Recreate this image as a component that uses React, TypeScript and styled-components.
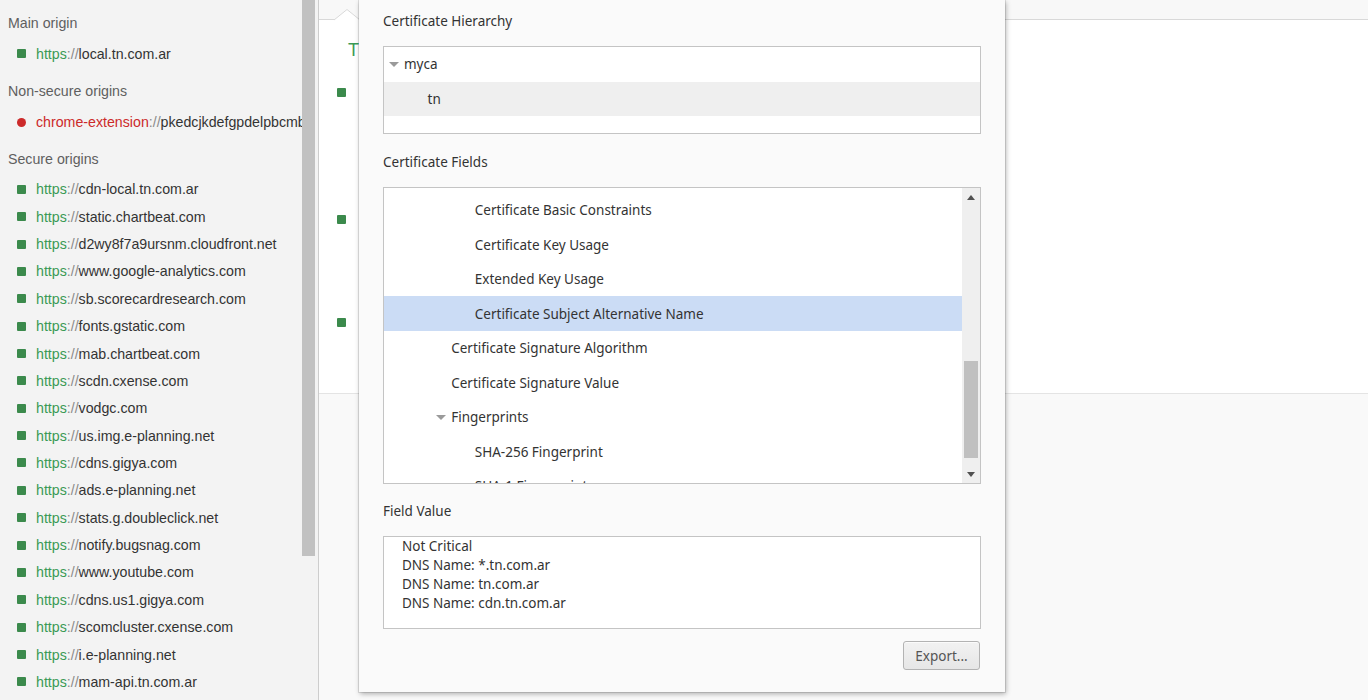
import React from "react";
import styled, { createGlobalStyle } from "styled-components";

const Global = createGlobalStyle`
  html, body { margin: 0; padding: 0; background: #ffffff; }
  body { font-family: "Liberation Sans", Arial, sans-serif; overflow: hidden; }
  * { box-sizing: border-box; }
`;

const Page = styled.div`
  position: relative;
  display: flex;
  width: 1368px;
  height: 700px;
  overflow: hidden;
`;

/* ---------- Sidebar ---------- */
const Sidebar = styled.aside`
  display: flex;
  width: 319px;
  height: 700px;
  background: #f3f3f3;
  border-right: 1px solid #cdcdcd;
`;

const OriginList = styled.div`
  flex: 1;
  min-width: 0;
  overflow: hidden;
`;

const Section = styled.section<{ $top: number }>`
  padding-top: ${(p) => p.$top}px;
`;

const SectionTitle = styled.div`
  height: 20px;
  line-height: 20px;
  padding-left: 8px;
  margin-bottom: 7px;
  font-size: 14.2px;
  color: #5f5f5f;
  white-space: nowrap;
`;

const OriginRow = styled.div`
  display: flex;
  align-items: center;
  height: 27.36px;
  padding-left: 17px;
  font-size: 14.2px;
  white-space: nowrap;
`;

const Marker = styled.span<{ $kind: "secure" | "insecure" }>`
  flex: none;
  width: 9px;
  height: 9px;
  margin-right: 10px;
  background: ${(p) => (p.$kind === "secure" ? "#3b8a4c" : "#cc2a2a")};
  border-radius: ${(p) => (p.$kind === "secure" ? "1px" : "50%")};
`;

const Scheme = styled.span<{ $kind: "secure" | "insecure" }>`
  color: ${(p) => (p.$kind === "secure" ? "#3a9a55" : "#cc2a2a")};
`;

const Sep = styled.span`
  color: #8a8a8a;
`;

const Host = styled.span`
  color: #333333;
`;

const SideScroll = styled.div`
  width: 13px;
  margin-right: 3px;
  flex: none;
`;

const SideThumb = styled.div`
  height: 556px;
  background: #c1c1c1;
`;

/* ---------- Main panel (behind dialog) ---------- */
const Main = styled.main`
  position: relative;
  flex: 1;
  display: flex;
  flex-direction: column;
  min-width: 0;
`;

const TopBar = styled.div`
  height: 20px;
  background: #f8f8f8;
  border-bottom: 1px solid #d9d9d9;
`;

const Notch = styled.svg`
  position: absolute;
  left: 15px;
  top: 8px;
`;

const Content = styled.div`
  height: 374px;
  padding: 18px 0 0 18px;
  background: #ffffff;
  border-bottom: 1px solid #e4e4e4;
`;

const Summary = styled.div`
  padding-left: 11px;
  height: 24px;
  line-height: 24px;
  font-size: 18px;
  color: #3a9a55;
  white-space: nowrap;
`;

const Explanation = styled.div<{ $h: number; $first?: boolean }>`
  display: flex;
  align-items: flex-start;
  height: ${(p) => p.$h}px;
  margin-top: ${(p) => (p.$first ? 21 : 0)}px;
`;

const ExplainSquare = styled.span`
  flex: none;
  width: 9px;
  height: 9px;
  margin-top: 5px;
  background: #3b8a4c;
  border-radius: 1px;
`;

const ExplainText = styled.div`
  margin-left: 30px;
  font-size: 14px;
  line-height: 20px;
  color: #333;
`;

const Footer = styled.div`
  flex: 1;
  background: #f9f9f9;
`;

/* ---------- Certificate dialog ---------- */
const Dialog = styled.div`
  position: absolute;
  left: 359px;
  top: 0;
  width: 646px;
  height: 692px;
  display: flex;
  flex-direction: column;
  padding: 12px 24px 0 24px;
  background: #fafafa;
  box-shadow: 0 0 0 1px rgba(0, 0, 0, 0.1), 1px 2px 5px rgba(0, 0, 0, 0.3);
  font-family: "Noto Sans", "DejaVu Sans", sans-serif;
  font-size: 13.5px;
  color: #333333;
`;

const Label = styled.div<{ $gap: number }>`
  height: 18px;
  line-height: 18px;
  margin-top: ${(p) => p.$gap}px;
  margin-bottom: 16px;
  white-space: nowrap;
`;

const Box = styled.div<{ $h: number }>`
  position: relative;
  height: ${(p) => p.$h}px;
  background: #ffffff;
  border: 1px solid #c4c4c4;
  overflow: hidden;
`;

const FieldsBox = styled(Box)`
  display: flex;
`;

const TreeViewport = styled.div`
  flex: 1;
  min-width: 0;
  overflow: hidden;
`;

const TreeScroller = styled.div`
  padding-top: 4.75px;
`;

const TreeRow = styled.div<{ $level: number; $selected?: boolean; $shade?: boolean }>`
  display: flex;
  align-items: center;
  height: 34.5px;
  flex: none;
  padding-left: ${(p) => 20 + p.$level * 23.6}px;
  white-space: nowrap;
  background: ${(p) => (p.$selected ? "#cbdcf5" : p.$shade ? "#efefef" : "transparent")};
`;

const Expander = styled.span`
  width: 0;
  height: 0;
  margin-left: -15px;
  margin-right: 5px;
  margin-top: 1px;
  border-left: 5px solid transparent;
  border-right: 5px solid transparent;
  border-top: 5px solid #9a9a9a;
`;

const VScroll = styled.div`
  flex: none;
  width: 18px;
  display: flex;
  flex-direction: column;
  background: #efefef;
`;

const ScrollArrow = styled.div<{ $dir: "up" | "down" }>`
  flex: none;
  height: 18px;
  display: flex;
  align-items: center;
  justify-content: center;
  &::before {
    content: "";
    width: 0;
    height: 0;
    border-left: 4.5px solid transparent;
    border-right: 4.5px solid transparent;
    ${(p) =>
      p.$dir === "up"
        ? "border-bottom: 5px solid #505050;"
        : "border-top: 5px solid #505050;"}
  }
`;

const ScrollTrackArea = styled.div`
  flex: 1;
  padding: 155px 2px 0 2px;
`;

const ScrollThumb = styled.div`
  height: 97px;
  background: #c0c0c0;
`;

const ValueBox = styled(Box)`
  padding-left: 18px;
  line-height: 19px;
`;

const ValueLine = styled.div`
  white-space: nowrap;
`;

const ButtonRow = styled.div`
  display: flex;
  justify-content: flex-end;
  margin-top: 12px;
  padding-right: 1px;
`;

const Button = styled.button`
  width: 77px;
  height: 29px;
  padding: 0;
  font-family: "Noto Sans", "DejaVu Sans", sans-serif;
  font-size: 13.5px;
  color: #555555;
  background: linear-gradient(#f2f2f2, #e6e6e6);
  border: 1px solid #b3b3b3;
  border-radius: 3px;
  box-shadow: inset 0 1px 0 #fbfbfb;
`;

const secureOrigins = [
  "cdn-local.tn.com.ar",
  "static.chartbeat.com",
  "d2wy8f7a9ursnm.cloudfront.net",
  "www.google-analytics.com",
  "sb.scorecardresearch.com",
  "fonts.gstatic.com",
  "mab.chartbeat.com",
  "scdn.cxense.com",
  "vodgc.com",
  "us.img.e-planning.net",
  "cdns.gigya.com",
  "ads.e-planning.net",
  "stats.g.doubleclick.net",
  "notify.bugsnag.com",
  "www.youtube.com",
  "cdns.us1.gigya.com",
  "scomcluster.cxense.com",
  "i.e-planning.net",
  "mam-api.tn.com.ar",
];

function Origin({ kind, scheme, host }: { kind: "secure" | "insecure"; scheme: string; host: string }) {
  return (
    <OriginRow>
      <Marker $kind={kind} />
      <Scheme $kind={kind}>{scheme}</Scheme>
      <Sep>://</Sep>
      <Host>{host}</Host>
    </OriginRow>
  );
}

const fieldRows: { text: string; level: number; expanded?: boolean; selected?: boolean }[] = [
  { text: "Certificate Basic Constraints", level: 3 },
  { text: "Certificate Key Usage", level: 3 },
  { text: "Extended Key Usage", level: 3 },
  { text: "Certificate Subject Alternative Name", level: 3, selected: true },
  { text: "Certificate Signature Algorithm", level: 2 },
  { text: "Certificate Signature Value", level: 2 },
  { text: "Fingerprints", level: 2, expanded: true },
  { text: "SHA-256 Fingerprint", level: 3 },
  { text: "SHA-1 Fingerprint", level: 3 },
];

export default function App() {
  return (
    <Page>
      <Global />
      <Sidebar>
        <OriginList>
          <Section $top={13}>
            <SectionTitle>Main origin</SectionTitle>
            <Origin kind="secure" scheme="https" host="local.tn.com.ar" />
          </Section>
          <Section $top={14}>
            <SectionTitle>Non-secure origins</SectionTitle>
            <Origin kind="insecure" scheme="chrome-extension" host="pkedcjkdefgpdelpbcmbmeomcjbeemfm" />
          </Section>
          <Section $top={13}>
            <SectionTitle>Secure origins</SectionTitle>
            {secureOrigins.map((h) => (
              <Origin key={h} kind="secure" scheme="https" host={h} />
            ))}
          </Section>
        </OriginList>
        <SideScroll>
          <SideThumb />
        </SideScroll>
      </Sidebar>

      <Main>
        <TopBar />
        <Notch width="26" height="13" viewBox="0 0 26 13">
          <polygon points="0,12 13,1.5 26,12" fill="#ffffff" />
          <polyline points="0,12 13,1.5 26,12" fill="none" stroke="#d9d9d9" strokeWidth="1" />
        </Notch>
        <Content>
          <Summary>This page is secure (valid HTTPS).</Summary>
          <Explanation $h={127} $first>
            <ExplainSquare />
            <ExplainText>Certificate - valid and trusted</ExplainText>
          </Explanation>
          <Explanation $h={103}>
            <ExplainSquare />
            <ExplainText>Connection - secure (strong TLS 1.2)</ExplainText>
          </Explanation>
          <Explanation $h={60}>
            <ExplainSquare />
            <ExplainText>Resources - all served securely</ExplainText>
          </Explanation>
        </Content>
        <Footer />
      </Main>

      <Dialog>
        <Label $gap={0}>Certificate Hierarchy</Label>
        <Box $h={88}>
          <TreeRow $level={0}>
            <Expander />
            myca
          </TreeRow>
          <TreeRow $level={1} $shade>
            tn
          </TreeRow>
        </Box>

        <Label $gap={19}>Certificate Fields</Label>
        <FieldsBox $h={297}>
          <TreeViewport>
            <TreeScroller>
              {fieldRows.map((r) => (
                <TreeRow key={r.text} $level={r.level} $selected={r.selected}>
                  {r.expanded && <Expander />}
                  {r.text}
                </TreeRow>
              ))}
            </TreeScroller>
          </TreeViewport>
          <VScroll>
            <ScrollArrow $dir="up" />
            <ScrollTrackArea>
              <ScrollThumb />
            </ScrollTrackArea>
            <ScrollArrow $dir="down" />
          </VScroll>
        </FieldsBox>

        <Label $gap={18}>Field Value</Label>
        <ValueBox $h={93}>
          <ValueLine>Not Critical</ValueLine>
          <ValueLine>DNS Name: *.tn.com.ar</ValueLine>
          <ValueLine>DNS Name: tn.com.ar</ValueLine>
          <ValueLine>DNS Name: cdn.tn.com.ar</ValueLine>
        </ValueBox>

        <ButtonRow>
          <Button>Export...</Button>
        </ButtonRow>
      </Dialog>
    </Page>
  );
}
